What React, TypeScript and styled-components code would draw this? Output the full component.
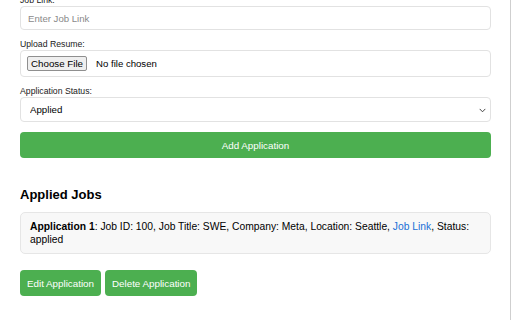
import React from 'react';
import styled, { createGlobalStyle } from 'styled-components';

const GlobalStyle = createGlobalStyle`
  html, body {
    margin: 0;
    padding: 0;
    background: #fff;
    overflow: hidden;
  }
  body {
    font-family: 'Liberation Sans', Arial, Helvetica, sans-serif;
    color: #000;
  }
`;

const Frame = styled.div`
  box-sizing: border-box;
  width: 511px;
  height: 320px;
  padding: 0 19px 0 20px;
  border-right: 1px solid #cfcfcf;
  overflow: hidden;
`;

const Form = styled.form`
  margin-top: -5px;
  display: flex;
  flex-direction: column;
`;

const Field = styled.div`
  display: flex;
  flex-direction: column;
  margin-bottom: 9px;
`;

const Label = styled.label`
  display: block;
  font-size: 8.7px;
  line-height: 10px;
  color: #222;
  margin-bottom: 1px;
`;

const TextInput = styled.input`
  box-sizing: border-box;
  width: 100%;
  height: 24px;
  margin: 0;
  padding: 0 7px;
  border: 1px solid #e2e2e2;
  border-radius: 4px;
  font-family: inherit;
  font-size: 9.6px;
  color: #000;
  outline: none;

  &::placeholder {
    color: #8a8a8a;
  }
`;

const FileInput = styled.input`
  box-sizing: border-box;
  width: 100%;
  height: 27px;
  margin: 0;
  padding: 0 6px;
  border: 1px solid #e2e2e2;
  border-radius: 4px;
  font-family: inherit;
  font-size: 9.6px;
  color: #000;
  line-height: 25px;

  &::file-selector-button {
    font-family: inherit;
    font-size: 9.75px;
    height: 15px;
    padding: 0 3px;
    margin-right: 9px;
    border: 1px solid #8f8f8f;
    border-radius: 2px;
    background: #efefef;
    color: #000;
  }
`;

const SelectWrap = styled.div`
  position: relative;
`;

const Select = styled.select`
  box-sizing: border-box;
  display: block;
  width: 100%;
  height: 25px;
  margin: 0;
  padding: 0 20px 0 9px;
  border: 1px solid #e2e2e2;
  border-radius: 4px;
  background: #fff;
  font-family: inherit;
  font-size: 9.7px;
  color: #000;
  appearance: none;
  outline: none;
`;

const Chevron = styled.svg`
  position: absolute;
  right: 5px;
  top: 50%;
  width: 7px;
  height: 5px;
  margin-top: -2px;
  pointer-events: none;
`;

const GreenButton = styled.button<{ $block?: boolean }>`
  box-sizing: border-box;
  height: 26px;
  margin: 0;
  margin-top: ${(p) => (p.$block ? '1px' : '0')};
  padding: 0 7px;
  border: none;
  border-radius: 4px;
  background: #4caf50;
  color: #fff;
  font-family: inherit;
  font-size: 9.8px;
  cursor: pointer;
  width: ${(p) => (p.$block ? '100%' : 'auto')};
`;

const Heading = styled.h2`
  margin: 29px 0 10px;
  font-size: 13px;
  line-height: 15px;
  font-weight: bold;
`;

const JobCard = styled.div`
  box-sizing: border-box;
  padding: 7px 9px;
  border: 1px solid #e6e6e6;
  border-radius: 5px;
  background: #f8f8f8;
  font-size: 10.3px;
  line-height: 13px;
`;

const JobLink = styled.a`
  color: #1a6fd6;
  text-decoration: none;
`;

const Actions = styled.div`
  display: flex;
  gap: 4px;
  margin-top: 16px;
`;

export default function App() {
  return (
    <>
      <GlobalStyle />
      <Frame>
        <Form onSubmit={(e) => e.preventDefault()}>
          <Field>
            <Label htmlFor="jobLink">Job Link:</Label>
            <TextInput id="jobLink" type="text" placeholder="Enter Job Link" />
          </Field>
          <Field>
            <Label htmlFor="resume">Upload Resume:</Label>
            <FileInput id="resume" type="file" />
          </Field>
          <Field>
            <Label htmlFor="status">Application Status:</Label>
            <SelectWrap>
              <Select id="status" defaultValue="applied">
                <option value="applied">Applied</option>
                <option value="interview">Interview</option>
                <option value="offer">Offer</option>
                <option value="rejected">Rejected</option>
              </Select>
              <Chevron viewBox="0 0 7 5" aria-hidden="true">
                <path d="M0.7 0.9 L3.5 3.8 L6.3 0.9" fill="none" stroke="#333" strokeWidth="0.9" />
              </Chevron>
            </SelectWrap>
          </Field>
          <GreenButton $block type="submit">
            Add Application
          </GreenButton>
        </Form>

        <Heading>Applied Jobs</Heading>
        <JobCard>
          <strong>Application 1</strong>: Job ID: 100, Job Title: SWE, Company: Meta, Location: Seattle,{' '}
          <JobLink href="#">Job Link</JobLink>, Status: applied
        </JobCard>
        <Actions>
          <GreenButton type="button">Edit Application</GreenButton>
          <GreenButton type="button">Delete Application</GreenButton>
        </Actions>
      </Frame>
    </>
  );
}
